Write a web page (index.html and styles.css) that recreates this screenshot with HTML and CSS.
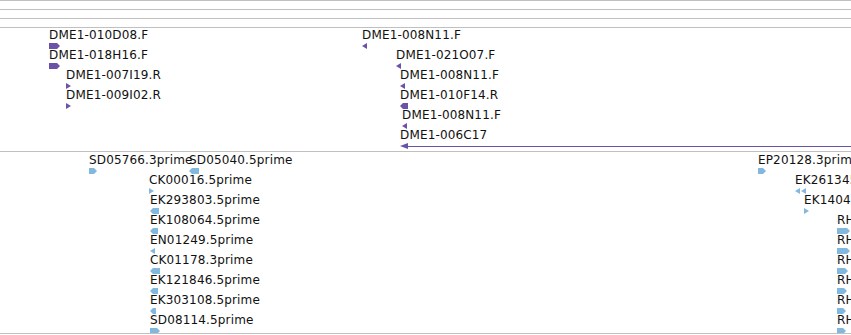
FILE: index.html
```html
<!DOCTYPE html>
<html>
<head>
<meta charset="utf-8">
<link rel="stylesheet" href="styles.css">
</head>
<body>
<div class="view">
  <div class="ruler">
    <div class="ruler-row"></div>
    <div class="ruler-row"></div>
    <div class="ruler-row"></div>
  </div>

  <div class="track track-bac">
    <div class="feat" style="left:49px;top:0px"><span class="label">DME1-010D08.F</span><svg class="glyph" width="11" height="6"><polygon points="0,0 8,0 11,3 8,6 0,6"/></svg></div>
    <div class="feat" style="left:49px;top:20px"><span class="label">DME1-018H16.F</span><svg class="glyph" width="11" height="6"><polygon points="0,0 8,0 11,3 8,6 0,6"/></svg></div>
    <div class="feat" style="left:66px;top:40px"><span class="label">DME1-007I19.R</span><svg class="glyph" width="5" height="6"><polygon points="0,0 5,3 0,6"/></svg></div>
    <div class="feat" style="left:66px;top:60px"><span class="label">DME1-009I02.R</span><svg class="glyph" width="5" height="6"><polygon points="0,0 5,3 0,6"/></svg></div>

    <div class="feat" style="left:362px;top:0px"><span class="label">DME1-008N11.F</span><svg class="glyph" width="5" height="6"><polygon points="0,3 5,0 5,6"/></svg></div>
    <div class="feat" style="left:396px;top:20px"><span class="label">DME1-021O07.F</span><svg class="glyph" width="5" height="6"><polygon points="0,3 5,0 5,6"/></svg></div>
    <div class="feat" style="left:400px;top:40px"><span class="label">DME1-008N11.F</span><svg class="glyph" width="5" height="6"><polygon points="0,3 5,0 5,6"/></svg></div>
    <div class="feat" style="left:400px;top:60px"><span class="label">DME1-010F14.R</span><svg class="glyph" width="8" height="6"><polygon points="0,3 3,0 8,0 8,6 3,6"/></svg></div>
    <div class="feat" style="left:402px;top:80px"><span class="label">DME1-008N11.F</span><svg class="glyph" width="5" height="6"><polygon points="0,3 5,0 5,6"/></svg></div>
    <div class="feat" style="left:400px;top:100px"><span class="label">DME1-006C17</span><svg class="glyph" width="451" height="6"><polygon points="0,3 8,0 8,6"/><rect x="7" y="3" width="444" height="1"/></svg></div>
  </div>

  <div class="track track-est">
    <div class="feat" style="left:89px;top:1px"><span class="label">SD05766.3prime</span><svg class="glyph" width="8" height="6"><polygon points="0,0 5,0 8,3 5,6 0,6"/></svg></div>
    <div class="feat" style="left:189px;top:1px"><span class="label">SD05040.5prime</span><svg class="glyph" width="10" height="6"><polygon points="0,3 3,0 10,0 10,6 3,6"/></svg></div>
    <div class="feat" style="left:149px;top:21px"><span class="label">CK00016.5prime</span><svg class="glyph" width="5" height="6"><polygon points="0,0 5,3 0,6"/></svg></div>
    <div class="feat" style="left:150px;top:41px"><span class="label">EK293803.5prime</span><svg class="glyph" width="9" height="6"><polygon points="0,3 3,0 9,0 9,6 3,6"/></svg></div>
    <div class="feat" style="left:150px;top:61px"><span class="label">EK108064.5prime</span><svg class="glyph" width="8" height="6"><polygon points="0,3 3,0 8,0 8,6 3,6"/></svg></div>
    <div class="feat" style="left:150px;top:81px"><span class="label">EN01249.5prime</span><svg class="glyph" width="5" height="6"><polygon points="0,3 5,0 5,6"/></svg></div>
    <div class="feat" style="left:150px;top:101px"><span class="label">CK01178.3prime</span><svg class="glyph" width="10" height="6"><polygon points="0,3 3,0 10,0 10,6 3,6"/></svg></div>
    <div class="feat" style="left:150px;top:121px"><span class="label">EK121846.5prime</span><svg class="glyph" width="8" height="6"><polygon points="0,3 3,0 8,0 8,6 3,6"/></svg></div>
    <div class="feat" style="left:150px;top:141px"><span class="label">EK303108.5prime</span><svg class="glyph" width="6" height="6"><polygon points="0,3 3,0 6,0 6,6 3,6"/></svg></div>
    <div class="feat" style="left:150px;top:161px"><span class="label">SD08114.5prime</span><svg class="glyph" width="10" height="6"><polygon points="0,0 7,0 10,3 7,6 0,6"/></svg></div>

    <div class="feat" style="left:758px;top:1px"><span class="label">EP20128.3prime</span><svg class="glyph" width="8" height="6"><polygon points="0,0 5,0 8,3 5,6 0,6"/></svg></div>
    <div class="feat" style="left:795px;top:21px"><span class="label">EK261345.5prime</span><svg class="glyph" width="11" height="6"><polygon points="0,3 5,0 5,6"/><polygon points="6,3 11,0 11,6"/></svg></div>
    <div class="feat" style="left:804px;top:41px"><span class="label">EK140412.5prime</span><svg class="glyph" width="5" height="6"><polygon points="0,0 5,3 0,6"/></svg></div>
    <div class="feat" style="left:837px;top:61px"><span class="label">RH01523.5prime</span><svg class="glyph" width="13" height="6"><polygon points="0,0 10,0 13,3 10,6 0,6"/></svg></div>
    <div class="feat" style="left:837px;top:81px"><span class="label">RH04786.5prime</span><svg class="glyph" width="13" height="6"><polygon points="0,0 10,0 13,3 10,6 0,6"/></svg></div>
    <div class="feat" style="left:837px;top:101px"><span class="label">RH36290.5prime</span><svg class="glyph" width="11" height="6"><polygon points="0,0 8,0 11,3 8,6 0,6"/></svg></div>
    <div class="feat" style="left:837px;top:121px"><span class="label">RH42715.5prime</span><svg class="glyph" width="10" height="6"><polygon points="0,0 7,0 10,3 7,6 0,6"/></svg></div>
    <div class="feat" style="left:837px;top:141px"><span class="label">RH49807.5prime</span><svg class="glyph" width="9" height="6"><polygon points="0,0 6,0 9,3 6,6 0,6"/></svg></div>
    <div class="feat" style="left:837px;top:161px"><span class="label">RH63150.5prime</span><svg class="glyph" width="9" height="6"><polygon points="0,0 6,0 9,3 6,6 0,6"/></svg></div>
  </div>
</div>
</body>
</html>
```

FILE: styles.css
```css
html, body {
  margin: 0;
  padding: 0;
  background: #ffffff;
}

body {
  width: 851px;
  height: 335px;
  overflow: hidden;
  font-family: "DejaVu Sans", sans-serif;
  font-size: 12px;
  color: #111111;
}

.view {
  display: flex;
  flex-direction: column;
  width: 851px;
}

.ruler {
  display: flex;
  flex-direction: column;
  border-top: 1px solid #c0c0c0;
}

.ruler-row {
  height: 8px;
  border-bottom: 1px solid #c0c0c0;
}

.track {
  position: relative;
  overflow: hidden;
  border-bottom: 1px solid #c0c0c0;
}

.track-bac {
  height: 123px;
}

.track-est {
  height: 181px;
}

.feat {
  position: absolute;
}

.label {
  display: block;
  line-height: 14px;
  white-space: nowrap;
  letter-spacing: 0.15px;
}

.glyph {
  display: block;
  margin-top: 1px;
  overflow: visible;
}

.track-bac .glyph {
  fill: #6a52a6;
}

.track-est .glyph {
  fill: #83b8de;
}
```
